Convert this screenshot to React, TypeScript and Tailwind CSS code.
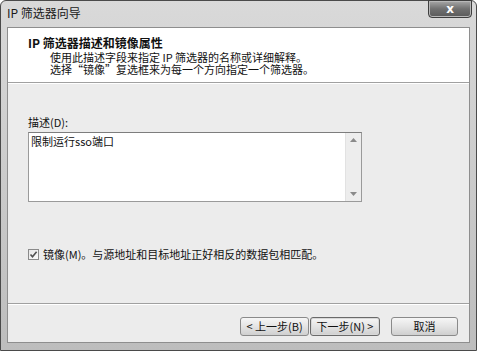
import React from 'react';

const cjk = { fontFamily: '"Noto Sans CJK SC", "Noto Sans", sans-serif' };

function WizardButton({ children, focused }: { children: React.ReactNode; focused?: boolean }) {
    return (
        <button
            className={`w-full h-[19px] rounded-[3px] border bg-gradient-to-b from-[#f6f6f6] via-[#e4e4e4] to-[#cfcfcf] text-[11px] leading-none text-[#111] flex items-center justify-center ${focused ? 'border-[#6a6a6a] shadow-[inset_0_0_0_1px_#d8d8d8]' : 'border-[#8a8a8a]'}`}
        >
            {children}
        </button>
    );
}

export default function App() {
    return (
        <div className="w-[479px] h-[351px] bg-white overflow-hidden" style={cjk}>
            <div className="w-[477px] h-[351px] rounded-t-[6px] border border-[#4a4a4a] bg-gradient-to-b from-[#d9d9d9] via-[#cbcbcb] to-[#bdbdbd] flex flex-col">
                {/* title bar */}
                <div className="h-[26px] flex items-start justify-between pl-[6px] pr-[4px]">
                    <span className="mt-[5px] text-[12px] leading-[14px] text-[#1a1a1a]">IP 筛选器向导</span>
                    <div className="w-[44px] h-[18px] -mt-px rounded-b-[4px] border border-[#3e3e3e] bg-gradient-to-b from-[#a8a8a8] via-[#707070] to-[#5a5a5a] flex items-center justify-center shadow-[inset_0_0_0_1px_#b8b8b8]">
                        <span className="text-white font-bold text-[12px] leading-none" style={{ fontFamily: '"DejaVu Sans", sans-serif' }}>x</span>
                    </div>
                </div>

                {/* client area */}
                <div className="flex-1 mx-[6px] mb-[7px] border border-[#8e8e8e] bg-[#ececec] flex flex-col">
                    <div className="h-[55px] bg-white border-b border-[#a0a0a0] pl-[20px] pt-[8px]">
                        <div className="text-[12px] leading-[14px] font-bold text-[#111]">IP 筛选器描述和镜像属性</div>
                        <p className="mt-[1px] pl-[22px] text-[11px] leading-[12px] text-[#111]">
                            使用此描述字段来指定 IP 筛选器的名称或详细解释。
                            <br />
                            选择“镜像”复选框来为每一个方向指定一个筛选器。
                        </p>
                    </div>
                    <div className="h-px bg-white" />

                    <div className="flex-1 flex flex-col pl-[20px] pt-[32px]">
                        <div className="text-[11px] leading-[13px] text-[#111]">描述(D):</div>
                        <div className="mt-[3px] w-[334px] h-[70px] border border-[#9a9a9a] border-t-[#7d7d7d] bg-white flex">
                            <div className="flex-1 pl-[2px] pt-[2px] text-[11px] leading-[13px] text-[#111]">限制运行sso端口</div>
                            <div className="w-[16px] bg-[#ededed] border-l border-[#e2e2e2] flex flex-col items-center justify-between py-[5px] text-[#8a8a8a]">
                                <svg width="7" height="4" viewBox="0 0 7 4"><path d="M0 4 L3.5 0 L7 4 Z" fill="currentColor" /></svg>
                                <svg width="7" height="4" viewBox="0 0 7 4"><path d="M0 0 L3.5 4 L7 0 Z" fill="currentColor" /></svg>
                            </div>
                        </div>

                        <div className="mt-[46px] flex items-center gap-[4px]">
                            <div className="w-[11px] h-[11px] border border-[#8a8a8a] bg-gradient-to-br from-[#e6e6e6] to-[#fafafa] flex items-center justify-center">
                                <svg width="9" height="9" viewBox="0 0 9 9"><path d="M1.5 4.5 L3.5 6.8 L7.6 1.8" stroke="#505050" strokeWidth="1.6" fill="none" /></svg>
                            </div>
                            <span className="text-[11px] leading-[13px] text-[#111]">镜像(M)。与源地址和目标地址正好相反的数据包相匹配。</span>
                        </div>
                    </div>

                    <div className="h-px bg-[#a0a0a0]" />
                    <div className="h-px bg-white" />
                    <div className="h-[37px] flex items-start justify-end pr-[11px] pt-[12px] gap-[11px]">
                        <div className="flex gap-px">
                            <div className="w-[69px]"><WizardButton>&lt; 上一步(B)</WizardButton></div>
                            <div className="w-[70px]"><WizardButton focused>下一步(N) &gt;</WizardButton></div>
                        </div>
                        <div className="w-[67px]"><WizardButton>取消</WizardButton></div>
                    </div>
                </div>
            </div>
        </div>
    );
}
